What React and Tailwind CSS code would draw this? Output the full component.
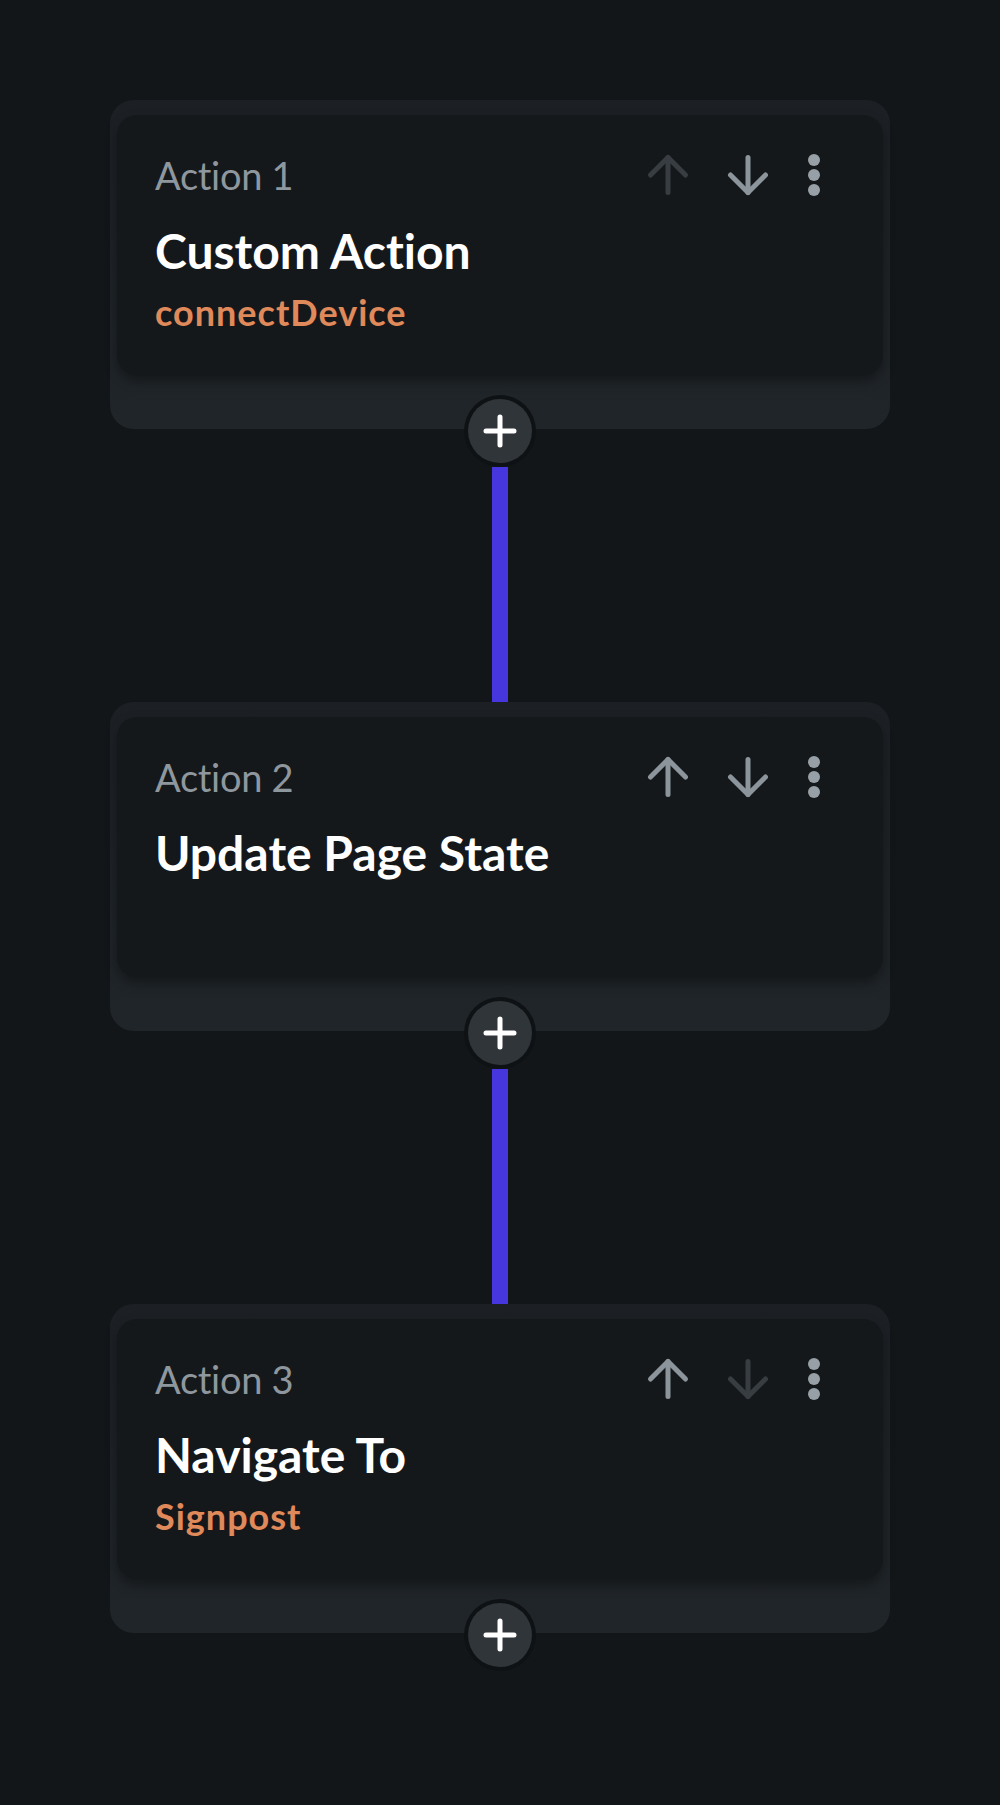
import React from 'react'
import { ArrowUp, ArrowDown } from 'lucide-react'

const actions = [
  { n: 1, title: 'Custom Action', sub: 'connectDevice', up: false, down: true },
  { n: 2, title: 'Update Page State', sub: null, up: true, down: true },
  { n: 3, title: 'Navigate To', sub: 'Signpost', up: true, down: false },
]

function Dots() {
  return (
    <svg width="24" height="44" viewBox="0 0 24 44" className="text-[#97a0a7]">
      <circle cx="12" cy="7" r="6" fill="currentColor" />
      <circle cx="12" cy="22" r="6" fill="currentColor" />
      <circle cx="12" cy="37" r="6" fill="currentColor" />
    </svg>
  )
}

function PlusButton() {
  return (
    <div className="relative z-10 -mt-[34px] w-[72px] h-[72px] rounded-full bg-[#0f1214] flex items-center justify-center">
      <div className="w-[64px] h-[64px] rounded-full bg-[#30353a] flex items-center justify-center">
        <svg width="34" height="34" viewBox="0 0 34 34">
          <path d="M17 3v28M3 17h28" stroke="#ffffff" strokeWidth="5" strokeLinecap="round" />
        </svg>
      </div>
    </div>
  )
}

function ActionCard({ item }) {
  return (
    <div className="w-[780px] rounded-[24px] bg-gradient-to-b from-[#1c2024] to-[#202529] pt-[15px] px-[7px] pb-[54px]">
      <div className="h-[260px] rounded-[20px] bg-[#15181b] shadow-[0_6px_12px_rgba(0,0,0,0.35)] pl-[38px] pr-[57px] pt-[36px]">
        <div className="flex items-center justify-between h-[48px]">
          <div className="text-[38px] leading-[48px] tracking-[-0.3px] text-[#8f979e]">Action {item.n}</div>
          <div className="flex items-center">
            <ArrowUp size={60} strokeWidth={2} className={item.up ? 'text-[#8c959c]' : 'text-[#383d42]'} />
            <ArrowDown size={60} strokeWidth={2} className={'ml-[20px] ' + (item.down ? 'text-[#8c959c]' : 'text-[#383d42]')} />
            <div className="ml-[24px]"><Dots /></div>
          </div>
        </div>
        <div className="mt-[23px] text-[48px] leading-[58px] font-bold text-white">{item.title}</div>
        {item.sub && (
          <div className="mt-[11px] text-[36px] leading-[42px] tracking-[1px] font-bold text-[#e0895a]">{item.sub}</div>
        )}
      </div>
    </div>
  )
}

export default function App() {
  return (
    <div className="min-h-[1805px] bg-[#131619] pt-[100px] flex flex-col items-center font-['Lato','Liberation_Sans',sans-serif] [font-variant-ligatures:none]">
      {actions.map((item, i) => (
        <React.Fragment key={item.n}>
          <ActionCard item={item} />
          <PlusButton />
          {i < actions.length - 1 && <div className="w-[16px] h-[235px] bg-[#4636dd]" />}
        </React.Fragment>
      ))}
    </div>
  )
}
